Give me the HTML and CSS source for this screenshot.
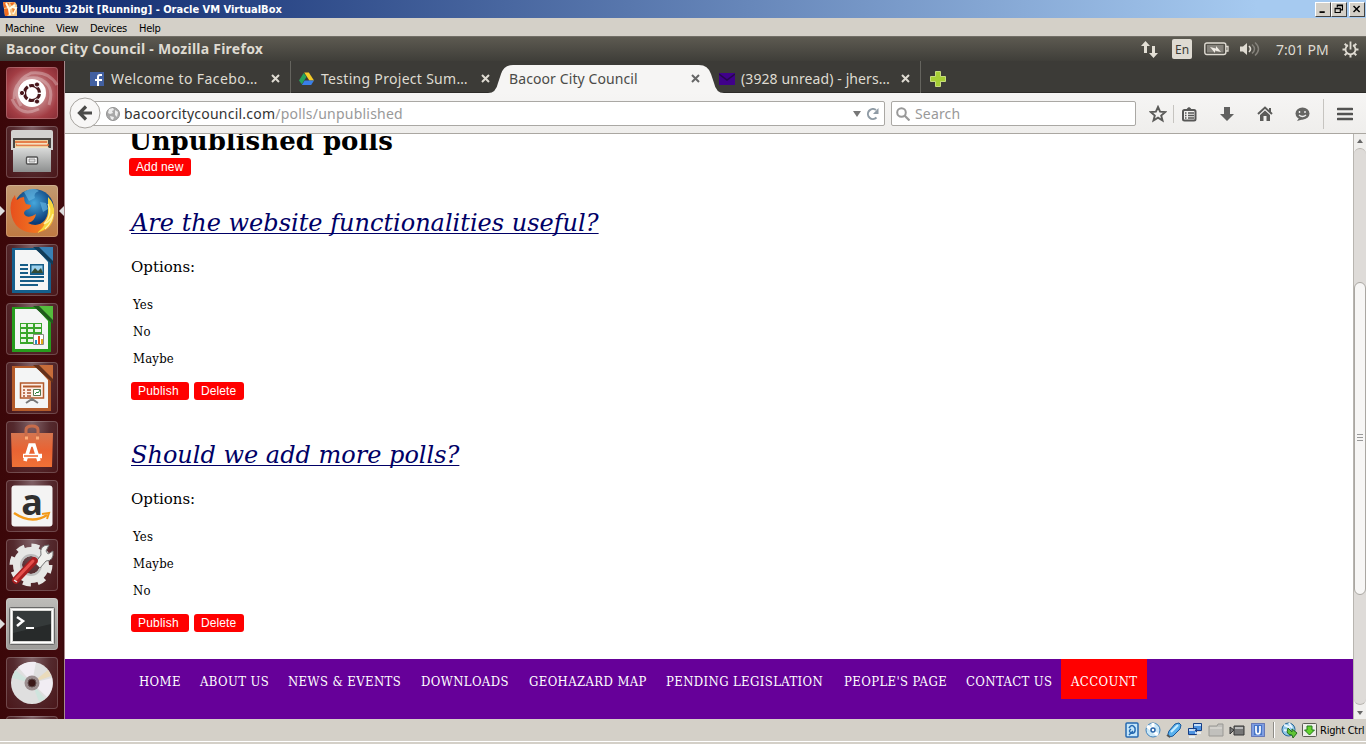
FILE: index.html
```html
<!DOCTYPE html>
<html lang="en">
<head>
<meta charset="utf-8">
<title>Bacoor City Council</title>
<link rel="stylesheet" href="styles.css">
</head>
<body>
<div class="screen">
  <header class="vm-title">
    <svg class="vm-icon" width="16" height="16" viewBox="0 0 16 16"><path d="M1 1h12l2 3v11H3z" fill="#f3c583"/><path d="M1 1l6 1-1 4-4 1zM8 2l5-1-3 4zM2 8l5-1 2 4-4 4H3z" fill="#f06b20"/><path d="M4 2l3 6 6-4M7 8l1 6M9 6l5 1-3 6" stroke="#fffbe7" stroke-width="2" fill="none"/><path d="M10 7l3 1-2 4z" fill="#ef8331"/></svg>
    <span class="vm-name">Ubuntu 32bit [Running] - Oracle VM VirtualBox</span>
    <div class="win-buttons">
      <svg class="win-btn" width="16" height="15" viewBox="0 0 16 15"><path d="M4 10.500h6" stroke="#000" stroke-width="2"/></svg>
      <svg class="win-btn" width="16" height="15" viewBox="0 0 16 15"><path d="M6 5V2.500h6V8h-2M6 3h6M3.500 6h6v5h-6zM3.500 6.500h6" stroke="#000" fill="none" stroke-width="1.300"/></svg>
      <svg class="win-btn last" width="16" height="15" viewBox="0 0 16 15"><path d="M4 3.500l7 7M11 3.500l-7 7" stroke="#000" stroke-width="1.700"/></svg>
    </div>
  </header>
  <nav class="vm-menu"><span class="m1">Machine</span><span class="m2">View</span><span class="m3">Devices</span><span class="m4">Help</span></nav>
  <div class="panel">
    <span class="panel-title">Bacoor City Council - Mozilla Firefox</span>
    <div class="indicators">
      <svg width="17" height="17" viewBox="0 0 17 17"><path d="M4.500 0L9 5H6v7H3V5H0zM12.500 17L8 12h3V5h3v7h3z" fill="#e3dfd5"/></svg>
      <span class="lang">En</span>
      <svg width="25" height="14" viewBox="0 0 25 14"><rect x=".8" y="1" width="21" height="11.500" rx="2" fill="none" stroke="#dfdbd2" stroke-width="1.400"/><rect x="3" y="3" width="16.500" height="7.500" fill="#85827b"/><path d="M22 4.500h2v4.500h-2" fill="none" stroke="#dfdbd2" stroke-width="1.300"/><path d="M6 5l6 1.500V4l5 6-6-1.500V11z" fill="#f0ece4"/></svg>
      <svg width="20" height="16" viewBox="0 0 20 16"><path d="M0 5.500h3L7 2v12L3 10.500H0z" fill="#dfdbd2"/><path d="M9 5q3 3 0 6" stroke="#dfdbd2" stroke-width="1.600" fill="none"/><path d="M12 3.500q5 4.500 0 9M15 1.500q7 6.500 0 13" stroke="#85827b" stroke-width="1.500" fill="none"/></svg>
      <span class="clock">7:01 PM</span>
      <svg class="gear" width="17" height="17" viewBox="-8.500 -8.500 17 17"><g stroke="#dfdbd2" fill="none"><path d="M-2.500-4.400A5 5 0 1 0 2.500-4.400" stroke-width="1.800"/><path d="M0-8v8" stroke-width="1.800"/><path d="M0 5v3M5 0h3M-5 0h-3M3.600 3.600l2.200 2.200M-3.600 3.600l-2.200 2.200M3.600-3.600l2.200-2.200M-3.600-3.600l-2.200-2.200" stroke-width="2"/></g></svg>
    </div>
  </div>
  <div class="desktop">
    <aside class="launcher">
      <div class="tile dash"><svg viewBox="0 0 52 52"><g fill="none" stroke="#fff" stroke-opacity=".28" stroke-width="3"><path d="M8 32Q8 9 31 11Q50 17 43 38M15 39Q3 16 25 6Q43 4 51 18M33 42Q14 51 6 32"/></g><circle cx="26" cy="26" r="14" fill="#fff"/><circle cx="26" cy="26" r="7.500" fill="none" stroke="#48171c" stroke-width="3.200" stroke-dasharray="14 1.700" stroke-dashoffset="-1"/><g fill="#48171c" stroke="#fff" stroke-width="1"><circle cx="16" cy="26" r="2.600"/><circle cx="31" cy="17.500" r="2.600"/><circle cx="31" cy="34.500" r="2.600"/></g></svg></div>
      <div class="tile glass"><svg viewBox="0 0 52 52"><path d="M5 6q0-2 2-2h38q2 0 2 2v18H5z" fill="#d2d2d0"/><path d="M7 12h38v12H7z" fill="#494642"/><path d="M9 14h33v9H9z" fill="#e8cfa1"/><path d="M9 16h32M10 19h33" stroke="#e4652e" stroke-width="1.500"/><path d="M11 18h30M9 22h34" stroke="#fff4db" stroke-width="1.200"/><path d="M7 22h38v24H7z" fill="url(#silver)"/><rect x="20.500" y="31" width="11" height="7" rx="1" fill="#fff" stroke="#525252" stroke-width="1.400"/><path d="M23 33h6v3h-6z" fill="#ddd" stroke="#777" stroke-width=".7"/></svg></div>
      <div class="tile fox running focused"><svg viewBox="0 0 52 52"><circle cx="28" cy="24" r="20" fill="url(#globe)"/><path d="M18 7q8-6 15-1-6 2-4 7l-6 3zM34 17l6 1 2 6-5 3z" fill="#64b7e4" opacity=".65"/><path d="M5 28Q3 17 9 10q0 3 2 5 3-3 7-3 0 4 2 7l5 1q0 4-5 5-4 3 0 6 4 2 10-2-1 7-8 9 10 5 17-3 5-7 3-18 6 6 6 13-1 16-19 18Q8 47 5 28z" fill="url(#foxfur)"/><path d="M42 12q7 7 6 16-2 15-17 20 12-9 11-23z" fill="#f8d83f"/><path d="M42 19q5 10-4 20 7-3 9-10-1 9-8 15" fill="none" stroke="#fff3a0" stroke-width="1.300"/></svg></div>
      <div class="tile glass"><svg viewBox="0 0 52 52"><path d="M6 4h26l13 13v32H6z" fill="#155f8d"/><path d="M9 6h22l11 12v28H9z" fill="#f4f5f5"/><path d="M29 3h18v15z" fill="#3981b5"/><path d="M27 3h6l14 14v4z" fill="#103c59"/><path d="M14 21h8M14 25h8M14 29h8M14 33h24M14 37h24M14 41h18" stroke="#175d87" stroke-width="2"/><path d="M24 20h14v11H24z" fill="#175d87"/><path d="M25.500 21.500h11V29h-11z" fill="#9bd0ed"/><path d="M25 29l4-5 3 3 3-3 2 5z" fill="#354b34"/></svg></div>
      <div class="tile glass"><svg viewBox="0 0 52 52"><path d="M6 4h26l13 13v32H6z" fill="#279c1d"/><path d="M9 6h22l11 12v28H9z" fill="#f4f5f5"/><path d="M29 3h18v15z" fill="#55bd3d"/><path d="M27 3h6l14 14v4z" fill="#205a1d"/><path d="M14 20h22v21H14z" fill="#39a62b"/><path d="M15 21h5v3h-5zm7 0h5v3h-5zm7 0h6v3h-6zM15 26h5v3h-5zm7 0h5v3h-5zm7 0h6v3h-6zM15 31h5v3h-5zm7 0h5v3h-5zM15 36h5v3h-5zm7 0h5v3h-5z" fill="#eaf6e6"/><path d="M27.500 31.500h10v10h-10z" fill="#fff" stroke="#8b8c83"/><path d="M29 37h2v4h-2z" fill="#268cc9"/><path d="M32 33h2v8h-2z" fill="#e74b18"/><path d="M35 36h2v5h-2z" fill="#e5a819"/></svg></div>
      <div class="tile glass"><svg viewBox="0 0 52 52"><path d="M6 4h26l13 13v32H6z" fill="#b45b2a"/><path d="M9 6h22l11 12v28H9z" fill="#f4f5f5"/><path d="M29 3h18v15z" fill="#c76c3a"/><path d="M27 3h6l14 14v4z" fill="#63301b"/><path d="M14.500 21h23v15h-23z" fill="#fdeee5" stroke="#b25a2c" stroke-width="1.500"/><path d="M17 24.500h18" stroke="#b25a2c" stroke-width="2"/><path d="M17 28h2m2 0h4M17 31h2m2 0h4M17 34h2m2 0h4" stroke="#a9512d" stroke-width="1.500"/><path d="M27.500 27.500h7v6h-7z" fill="#fff" stroke="#557650"/><path d="M29 32l2-2 1 1 2-3" stroke="#268539" fill="none"/><path d="M20 41l6-4 6 4M26 36v3" stroke="#777" stroke-width="2" fill="none"/></svg></div>
      <div class="tile glass"><svg viewBox="0 0 52 52"><path d="M5 12h42l-1 34H6z" fill="url(#orange)"/><path d="M20 16V9q0-4 6-4t6 4v7" fill="none" stroke="#c76c4b" stroke-width="3"/><path d="M19 17h3m8 0h3" stroke="#ffad7a" stroke-width="3"/><path d="M19 40l5-16h4l5 16" fill="none" stroke="#fff" stroke-width="3.600"/><path d="M17 35h19" stroke="#fff" stroke-width="4.500"/><path d="M18 35h14" stroke="#ef652a" stroke-width="1.500"/></svg></div>
      <div class="tile glass"><svg viewBox="0 0 52 52"><rect x="5.500" y="5.500" width="41" height="41" rx="3" fill="#f4f4f3"/><path d="M8 33q18 12 33 2" fill="none" stroke="#f39a18" stroke-width="2.500"/><path d="M36 34l7-1-2 6" fill="none" stroke="#f39a18" stroke-width="2"/></svg><span class="amazon">a</span></div>
      <div class="tile glass"><svg viewBox="0 0 52 52"><g fill="none" stroke="#e7e7e5"><circle cx="25" cy="26" r="13.500" stroke-width="9"/><circle cx="25" cy="26" r="19" stroke-width="5" stroke-dasharray="7.900 7"/></g><circle cx="25" cy="26" r="10" fill="none" stroke="#bbb" stroke-width="2"/><path d="M29 24l6-8q-2-10 8-10l-3 6 2 3 5-3q1 10-7 10l-6 7z" fill="#efefec" stroke="#777"/><path d="M10 41l18-19" stroke="#a91e20" stroke-width="7.500" stroke-linecap="round"/><path d="M10 40l17-18" stroke="#e5504d" stroke-width="3" stroke-linecap="round"/><path d="M8 41l3 2" stroke="#eee" stroke-width="1.500"/></svg></div>
      <div class="tile terminal running"><svg viewBox="0 0 52 52"><rect x="3.500" y="9.500" width="45" height="37" rx="1" fill="#d8d8d5" stroke="#676767"/><path d="M5.500 11.500h41v33h-41z" fill="none" stroke="#fff"/><path d="M7 13h38v30H7z" fill="#272a2a"/><path d="M7 13h38v13L7 35z" fill="#404646" opacity=".6"/><path d="M11 19l6 4-6 5" fill="none" stroke="#fff" stroke-width="2.500"/><path d="M20 30h8" stroke="#fff" stroke-width="2"/></svg></div>
      <div class="tile glass"><svg viewBox="0 0 52 52"><circle cx="26" cy="26" r="21" fill="#dfdfdf"/><path d="M26 26L12 10q8-6 18-5zM26 26l20-5q2 12-5 19z" fill="#f1edf3"/><path d="M26 26L9 13l-3 8zM26 26l7 19 6-3z" fill="#cfe4dd"/><path d="M26 26L42 13l3 6z" fill="#eadbbb"/><circle cx="26" cy="26" r="7.500" fill="#9b8d8e"/><circle cx="26" cy="26" r="4" fill="#3a1717" stroke="#5c4949"/></svg></div>
      <div class="tile glass"></div>
      <svg class="defs" width="0" height="0"><defs><linearGradient id="silver" x2="0" y2="1"><stop stop-color="#d9dad9"/><stop offset="1" stop-color="#8d8f8f"/></linearGradient><radialGradient id="globe" cy=".35"><stop stop-color="#46a7dc"/><stop offset="1" stop-color="#093b78"/></radialGradient><linearGradient id="foxfur"><stop stop-color="#e7501d"/><stop offset=".65" stop-color="#f27621"/><stop offset="1" stop-color="#f4bd36"/></linearGradient><linearGradient id="orange" x2="0" y2="1"><stop stop-color="#d57650"/><stop offset=".5" stop-color="#e96333"/><stop offset="1" stop-color="#ef7136"/></linearGradient></defs></svg>
    </aside>
    <main class="browser">
      <div class="tabs">
        <div class="tab"><svg class="fav" width="15" height="16" viewBox="0 0 15 16"><path d="M0 1h14v14H0z" fill="#4260a1"/><path d="M12 4h-2q-2 0-2 2v9M5 9h7" stroke="#fff" stroke-width="2" fill="none"/></svg><span class="t1">Welcome to Facebo…</span><svg class="x" viewBox="0 0 9 9"><path d="M1 1l7 7m0-7L1 8"/></svg></div>
        <div class="tab"><svg class="fav" width="15" height="15" viewBox="0 0 16 16"><path d="M5.500 1.500h5L16 10h-5z" fill="#f5cb27"/><path d="M5 2l3 4-5 8-3-4z" fill="#24a45c"/><path d="M6 10h10l-3 5H3z" fill="#397fe9"/></svg><span class="t2">Testing Project Sum…</span><svg class="x" viewBox="0 0 9 9"><path d="M1 1l7 7m0-7L1 8"/></svg></div>
        <div class="tab active"><svg class="tab-shape" width="236" height="28" viewBox="0 0 236 28"><path d="M0 28Q8 28 10 18l3-9Q16 0 25 0h186q9 0 12 9l3 9q2 10 10 10z" fill="#f6f5f4"/></svg><span class="t3">Bacoor City Council</span><svg class="x" viewBox="0 0 9 9"><path d="M1 1l7 7m0-7L1 8"/></svg></div>
        <div class="tab"><svg class="fav" width="16" height="16" viewBox="0 0 16 16"><path d="M0 2h16v12H0z" fill="#40018a"/><path d="M0 3l8 6 8-6" fill="none" stroke="#26084b" stroke-width="1.500"/></svg><span class="t4">(3928 unread) - jhers…</span><svg class="x" viewBox="0 0 9 9"><path d="M1 1l7 7m0-7L1 8"/></svg></div>
        <svg class="plus" width="16" height="16" viewBox="0 0 16 16"><path d="M5.500.5h5v5h5v5h-5v5h-5v-5h-5v-5h5z" fill="#a6ce35" stroke="#c6dc7c"/></svg>
      </div>
      <div class="toolbar">
        <div class="url">
          <svg class="back" width="32" height="32" viewBox="0 0 32 32"><circle cx="16" cy="16" r="15" fill="#f8f7f6" stroke="#a6a39e"/><path d="M23 16H12M17 9.500L10.500 16l6.500 6.500" fill="none" stroke="#4b4b49" stroke-width="3.200"/></svg>
          <svg class="world" width="14" height="14" viewBox="0 0 14 14"><circle cx="7" cy="7" r="6.500" fill="#a8a8a8" stroke="#929292"/><path d="M3 2l4-1 1 2-2 1 1 2-3 1-2-1zM9 3l3 2-1 5-2-2zM4 9l4 1-1 3-2-1z" fill="#eee"/></svg>
          <span class="address"><b>bacoorcitycouncil.com</b>/polls/unpublished</span>
          <svg width="8" height="6" viewBox="0 0 8 6"><path d="M0 0h8L4 6z" fill="#777"/></svg>
          <svg class="reload" width="12" height="12" viewBox="0 0 12 12"><path d="M9.500 9.500A5 5 0 1 1 9 2" fill="none" stroke="#8f9ba5" stroke-width="2"/><path d="M11.500 0v6H6z" fill="#8f9ba5"/></svg>
        </div>
        <div class="search"><svg width="14" height="14" viewBox="0 0 14 14"><circle cx="5.500" cy="5.500" r="4.300" fill="none" stroke="#999" stroke-width="2"/><path d="M8.500 8.500l5 5" stroke="#999" stroke-width="2.200"/></svg><span>Search</span></div>
        <div class="tools">
          <svg width="18" height="18" viewBox="0 0 18 18"><path d="M9 2l2.100 4.700 5 .4-3.900 3.400 1.300 5L9 12.700l-4.500 2.800 1.300-5-3.900-3.400 5-.4z" fill="none" stroke="#5a5a58" stroke-width="1.900"/></svg>
          <i class="divider d1"></i>
          <svg class="list" width="16" height="16" viewBox="0 0 16 16"><rect x="2" y="4" width="12.500" height="10.500" rx="1.500" fill="none" stroke="#575756" stroke-width="2"/><path d="M5 4l1.500-2L8 1l1.500 1L11 4" fill="#575756"/><path d="M4 7h1.500m1.500 0h6M4 9.500h1.500m1.500 0h6M4 12h1.500m1.500 0h6" stroke="#575756" stroke-width="1.300"/></svg>
          <svg class="down" width="14" height="14" viewBox="0 0 14 14"><path d="M4 0h6v7h4l-7 7-7-7h4z" fill="#616160"/></svg>
          <svg class="home" width="16" height="16" viewBox="0 0 16 16"><path d="M1 8l7-6.500L15 8" stroke="#5b5b59" fill="none" stroke-width="2"/><path d="M12 2h2v5l-2-2zM3 9l5-4.500L13 9v6H9.500v-5h-3v5H3z" fill="#5b5b59"/></svg>
          <svg class="chat" width="15" height="14" viewBox="0 0 15 14"><ellipse cx="7.500" cy="6.500" rx="7" ry="6" fill="#656563"/><path d="M4 11l-2 3 7-2" fill="#656563"/><path d="M4.500 4v2M10 4v2M4 8q3.500 3 7 0" stroke="#eee" stroke-width="1.400" fill="none"/></svg>
          <i class="divider d2"></i>
          <svg class="burger" width="16" height="14" viewBox="0 0 16 14"><path d="M1 2h14M1 7h14M1 12h14" stroke="#535352" stroke-width="2.600" stroke-linecap="round"/></svg>
        </div>
      </div>
      <div class="viewport">
        <div class="page">
          <div class="content">
            <h1>Unpublished polls</h1>
            <div class="add"><button class="btn-add">Add new</button></div>
            <section class="poll"><h2><span>Are the website functionalities useful?</span></h2><p>Options:</p><ul><li>Yes</li><li>No</li><li>Maybe</li></ul><div class="actions"><button class="publish">Publish</button><button class="delete">Delete</button></div></section>
            <section class="poll"><h2><span>Should we add more polls?</span></h2><p>Options:</p><ul><li>Yes</li><li>Maybe</li><li>No</li></ul><div class="actions"><button class="publish">Publish</button><button class="delete">Delete</button></div></section>
          </div>
          <footer><span>HOME</span><span>ABOUT US</span><span>NEWS &amp; EVENTS</span><span>DOWNLOADS</span><span>GEOHAZARD MAP</span><span>PENDING LEGISLATION</span><span>PEOPLE'S PAGE</span><span>CONTACT US</span><span class="account">ACCOUNT</span></footer>
        </div>
        <div class="scrollbar"><svg width="12" height="14" viewBox="0 0 12 14"><path d="M3 9l3-4 3 4z" fill="#666"/></svg><div class="track"><div class="thumb"><i></i></div></div><svg width="12" height="14" viewBox="0 0 12 14"><path d="M3 6l3 4 3-4z" fill="#666"/></svg></div>
      </div>
    </main>
  </div>
  <footer class="status">
    <svg width="16" height="16" viewBox="0 0 16 16"><rect x="2" y="1" width="12" height="14" rx="1" fill="#c5e6fa" stroke="#2468b0" stroke-width="1.500"/><path d="M5 6q3-5 6 0 1 6-4 5-3-2 0-4M5 13l4-4" fill="none" stroke="#2468b0" stroke-width="1.500"/></svg>
    <svg width="16" height="16" viewBox="0 0 16 16"><circle cx="8" cy="8" r="7" fill="#c9e6f6" stroke="#3f82bd"/><path d="M8 1v5M2 4l4 3M9 10l4 3" stroke="#fff" stroke-width="3"/><circle cx="8" cy="8" r="2" fill="#fff" stroke="#2964a9" stroke-width="1.500"/></svg>
    <svg width="16" height="16" viewBox="0 0 16 16"><path d="M3 9l6-7 4-1 2 2-1 4-7 7-4 1-1-3z" fill="#58b0ed" stroke="#17569a"/><path d="M5 10l7-7" stroke="#c8edff" stroke-width="2"/><path d="M1 13l3 2" stroke="#555" stroke-width="2"/></svg>
    <svg width="16" height="16" viewBox="0 0 16 16"><path d="M6.500 1.500h8v7h-8zM1.500 6.500h8v6h-8z" fill="#4e93e1" stroke="#173e85"/><path d="M7 3h7M2 8h6M8 11h6M2 15h6" stroke="#eef7ff" stroke-width="1.300"/></svg>
    <svg width="16" height="16" viewBox="0 0 16 16"><path d="M1 4h8l1-2h5v12H1z" fill="#c1c0bc" stroke="#999894"/><path d="M2 6h12" stroke="#e5e2dc"/></svg>
    <svg width="16" height="16" viewBox="0 0 16 16"><path d="M5 4h10v9H5zM1 5l4 3-4 4z" fill="#777" stroke="#373737"/><path d="M6 6h8" stroke="#bbb" stroke-width="2"/></svg>
    <svg width="16" height="16" viewBox="0 0 16 16"><rect x="1.500" y="1.500" width="13" height="13" fill="#7e9de0" stroke="#243a9b" stroke-dasharray="1 1"/><path d="M4 3h8v10H4z" fill="#4675c7"/><path d="M6 4v5q0 3 2 3t2-3V4" fill="none" stroke="#fff" stroke-width="1.700"/></svg>
    <i class="status-divider"></i>
    <svg width="17" height="16" viewBox="0 0 17 16"><circle cx="7.500" cy="7.500" r="6.500" fill="#91c7e9" stroke="#286595"/><path d="M3 3l5 2-1 4-4-1M8 1l3 5" stroke="#e9f5ff" stroke-width="2" fill="none"/><path d="M7 6l4 4V7l5 4-4 5-1-3q-4 0-5-3z" fill="#61c536" stroke="#276c21"/></svg>
    <svg class="capture" width="15" height="16" viewBox="0 0 15 16"><rect x=".5" y="1.500" width="14" height="13" rx="1" fill="#eeeeea" stroke="#5d5d55"/><path d="M5 4h5v4h2.500l-5 5-5-5H5z" fill="#62d32c" stroke="#267821"/></svg>
    <span class="host-key">Right Ctrl</span>
  </footer>
</div>
</body>
</html>
```
FILE: styles.css
```css
* { box-sizing: border-box; }
body { margin: 0; }
svg { display: block; flex-shrink: 0; }
span { white-space: nowrap; }
.screen { width: 1366px; height: 744px; overflow: hidden; display: flex; flex-direction: column; background: #d4d0c8; font-family: "Noto Sans", sans-serif; }
.vm-title { height: 18px; flex: none; display: flex; align-items: center; background: linear-gradient(90deg, #0a246a, #a6caf0 92%); padding: 0 1px 0 2px; }
.vm-name { font: bold 11px/19px "DejaVu Sans Condensed", "DejaVu Sans", sans-serif; color: #fff; margin-left: 2px; }
.win-buttons { margin-left: auto; display: flex; }
.win-btn { background: #d4d0c8; border: 1px solid; border-color: #fff #444 #444 #fff; }
.win-btn.last { margin-left: 2px; }
.vm-menu { height: 18px; flex: none; padding-left: 5px; display: flex; font: 11px/21px "DejaVu Sans Condensed", "DejaVu Sans", sans-serif; letter-spacing: -.3px; color: #000; }
.m1 { width: 51px; }
.m2 { width: 34px; }
.m3 { width: 49px; }
.panel { height: 25px; flex: none; display: flex; justify-content: space-between; background: linear-gradient(#5d5a51, #3f3e39); color: #dfdbd2; border-top: 1px solid #716e66; padding: 0 7px 0 6px; }
.panel-title { font: bold 14px/24px "Noto Sans", sans-serif; letter-spacing: .25px; }
.indicators { display: flex; align-items: center; }
.lang { width: 20px; height: 20px; margin: 0 12px 0 14px; background: #dfdbd2; color: #3c3b37; border-radius: 2px; font-size: 12px; line-height: 21px; text-align: center; }
.indicators svg:nth-child(4) { margin-left: 11px; }
.clock { margin: 0 13px 0 16px; width: 53px; font-size: 14px; letter-spacing: 0; }
.desktop { height: 658px; display: flex; flex: none; overflow: hidden; }
.launcher { width: 65px; flex: none; padding: 6px 0 0 6px; overflow: hidden; background: linear-gradient(90deg, #3b0709, #420b0e 62px, #35090b 64px, #a9888b 64px); display: flex; flex-direction: column; gap: 7px; }
.tile { width: 52px; height: 52px; flex: none; border-radius: 4px; position: relative; box-shadow: inset 0 0 0 1px rgba(255,255,255,.2); }
.tile svg { width: 52px; height: 52px; }
.glass { background: radial-gradient(ellipse at 50% 0, #806267, #542a2e 50%, #4a1619); }
.dash { background: radial-gradient(circle, #d3a1a2 20%, #a23d44 70%, #852c34); }
.fox { background: linear-gradient(#c29a72, #bf7942); }
.terminal { background: linear-gradient(#bdbcb9, #9c9b98); }
.running::before { content: ""; position: absolute; left: -6px; top: 21px; border: 5px solid transparent; border-left-color: #ddd; border-right: 0; }
.focused::after { content: ""; position: absolute; right: -6px; top: 21px; border: 5px solid transparent; border-right-color: #ddd; border-left: 0; }
.amazon { position: absolute; left: 0; top: -4px; width: 52px; height: 52px; text-align: center; font: bold 36px/52px "Open Sans", sans-serif; color: #30302f; }
.defs { position: absolute; }
.browser { width: 1301px; flex: none; display: flex; flex-direction: column; }
.tabs { height: 32px; flex: none; display: flex; background: #3c3b37; padding-left: 16px; position: relative; border-bottom: 1px solid #2d2c29; }
.tab { width: 210px; height: 32px; padding: 3px 10px 0 9px; display: flex; align-items: center; color: #dfdbd2; font-size: 14px; position: relative; border-right: 1px solid #65645e; }
.tab:nth-child(2), .active { border-color: transparent; }
.tab:nth-child(2) { padding-left: 8px; padding-right: 10px; }
.tab:nth-child(2) .fav { margin-right: 7px; }
.tab:nth-child(4) { padding-left: 8px; }
.t1 { letter-spacing: .42px; }
.t2 { letter-spacing: .3px; }
.t3 { letter-spacing: .1px; }
.t4 { letter-spacing: .1px; }
.fav { margin-right: 6px; }
.x { width: 9px; height: 9px; margin-left: auto; stroke: #dfdbd2; stroke-width: 2; }
.active { color: #4b4b48; padding-left: 8px; z-index: 1; }
.active .x { stroke: #666; position: relative; }
.tab-shape { position: absolute; left: -13px; top: 4px; }
.active span { position: relative; }
.plus { margin: 10px 0 0 9px; }
.toolbar { height: 41px; flex: none; display: flex; padding: 8px 0 0 20px; background: linear-gradient(#f6f5f4, #efeeec); border-bottom: 1px solid #aaa7a1; }
.url, .search { height: 25px; background: #fff; border: 1px solid #aaa8a4; border-radius: 2px; display: flex; align-items: center; }
.url { width: 800px; margin-right: 6px; padding-right: 5px; position: relative; }
.back { position: absolute; left: -17px; top: -5px; }
.world { margin: 0 4px 0 20px; }
.address { flex: 1; color: #999; font-size: 14px; letter-spacing: .22px; }
.address b { color: #333; font-weight: normal; }
.reload { margin-left: 6px; }
.search { width: 245px; padding-left: 4px; color: #999; font-size: 14px; }
.search span { margin-left: 5px; letter-spacing: .15px; }
.tools { display: flex; align-items: center; height: 25px; padding-left: 13px; }
.divider { width: 1px; height: 30px; background: #c6c4c0; }
.d1 { height: 18px; margin-left: 6px; }
.list { margin-left: 7px; }
.down { margin-left: 23px; }
.home { margin-left: 23px; }
.chat { margin-left: 22px; }
.d2 { margin: 0 13px; }
.viewport { height: 585px; flex: none; display: flex; overflow: hidden; }
.page { width: 1288px; height: 585px; background: #fff; font-family: "DejaVu Serif", serif; }
.content { height: 525px; padding-left: 66px; display: flow-root; overflow: hidden; }
h1 { font-size: 26px; line-height: 30px; margin: -8px 0 0 -2px; height: 32px; font-weight: bold; }
.add { height: 18px; margin-left: -2px; display: flex; }
.poll { height: 232px; padding-top: 32px; }
h2 { margin: 0; font: italic 24px/30px "DejaVu Serif", serif; color: #000066; }
h2 span { text-decoration: underline; text-underline-offset: 2px; text-decoration-thickness: 1px; text-decoration-skip-ink: none; }
.poll p { font-size: 15px; line-height: 20px; margin: 19px 0 14px; }
ul { list-style: none; margin: 0 0 10px; padding: 0 0 0 2px; }
li { font-family: "DejaVu Serif Condensed", "DejaVu Serif", serif; font-size: 13px; line-height: 27px; letter-spacing: .2px; }
.actions { display: flex; gap: 5px; }
button { height: 18px; border: 0; border-radius: 3px; padding: 0 0 0 7px; background: #f00; color: #fff; text-align: left; font: 12px/18px "Liberation Sans", Arial, sans-serif; }
.btn-add { width: 62px; letter-spacing: .1px; }
.publish { width: 58px; letter-spacing: .2px; }
.delete { width: 50px; letter-spacing: .1px; }
.page footer { height: 60px; background: #609; padding-left: 64px; display: grid; grid-template-columns: 61px 88px 133px 108px 137px 178px 122px 105px 86px; color: #fff; font-family: "DejaVu Serif Condensed", "DejaVu Serif", serif; }
.page footer span { height: 40px; padding: 2px 0 0 10px; font-size: 13px; line-height: 41px; letter-spacing: .38px; }
.page footer .account { background: #f00; }
.scrollbar { width: 13px; background: #f0efed; border-left: 1px solid #b8b5b0; display: flex; flex-direction: column; }
.track { flex: 1; background: #dedbd8; border: 1px solid #b8b5b0; border-width: 1px 0; border-radius: 6px; padding-top: 133px; }
.thumb { height: 313px; background: #f7f6f5; border: 1px solid #aaa7a2; border-radius: 6px; padding: 151px 2px 0; }
.thumb i { display: block; height: 8px; background: repeating-linear-gradient(#999 0 1px, transparent 1px 3px); }
.status { height: 25px; flex: none; display: flex; padding: 3px 0 0 1124px; gap: 5px; border-bottom: 2px solid #d4d0c8; box-shadow: inset 0 -1px #fff; font: 11px/17px "DejaVu Sans Condensed", "DejaVu Sans", sans-serif; }
.status-divider { width: 2px; height: 16px; background: #8e8c86; border-right: 1px solid #fff; margin: 0 1px 0 2px; }
.capture { margin-left: -1px; }
.host-key { letter-spacing: -.25px; margin-left: -2px; }
```
